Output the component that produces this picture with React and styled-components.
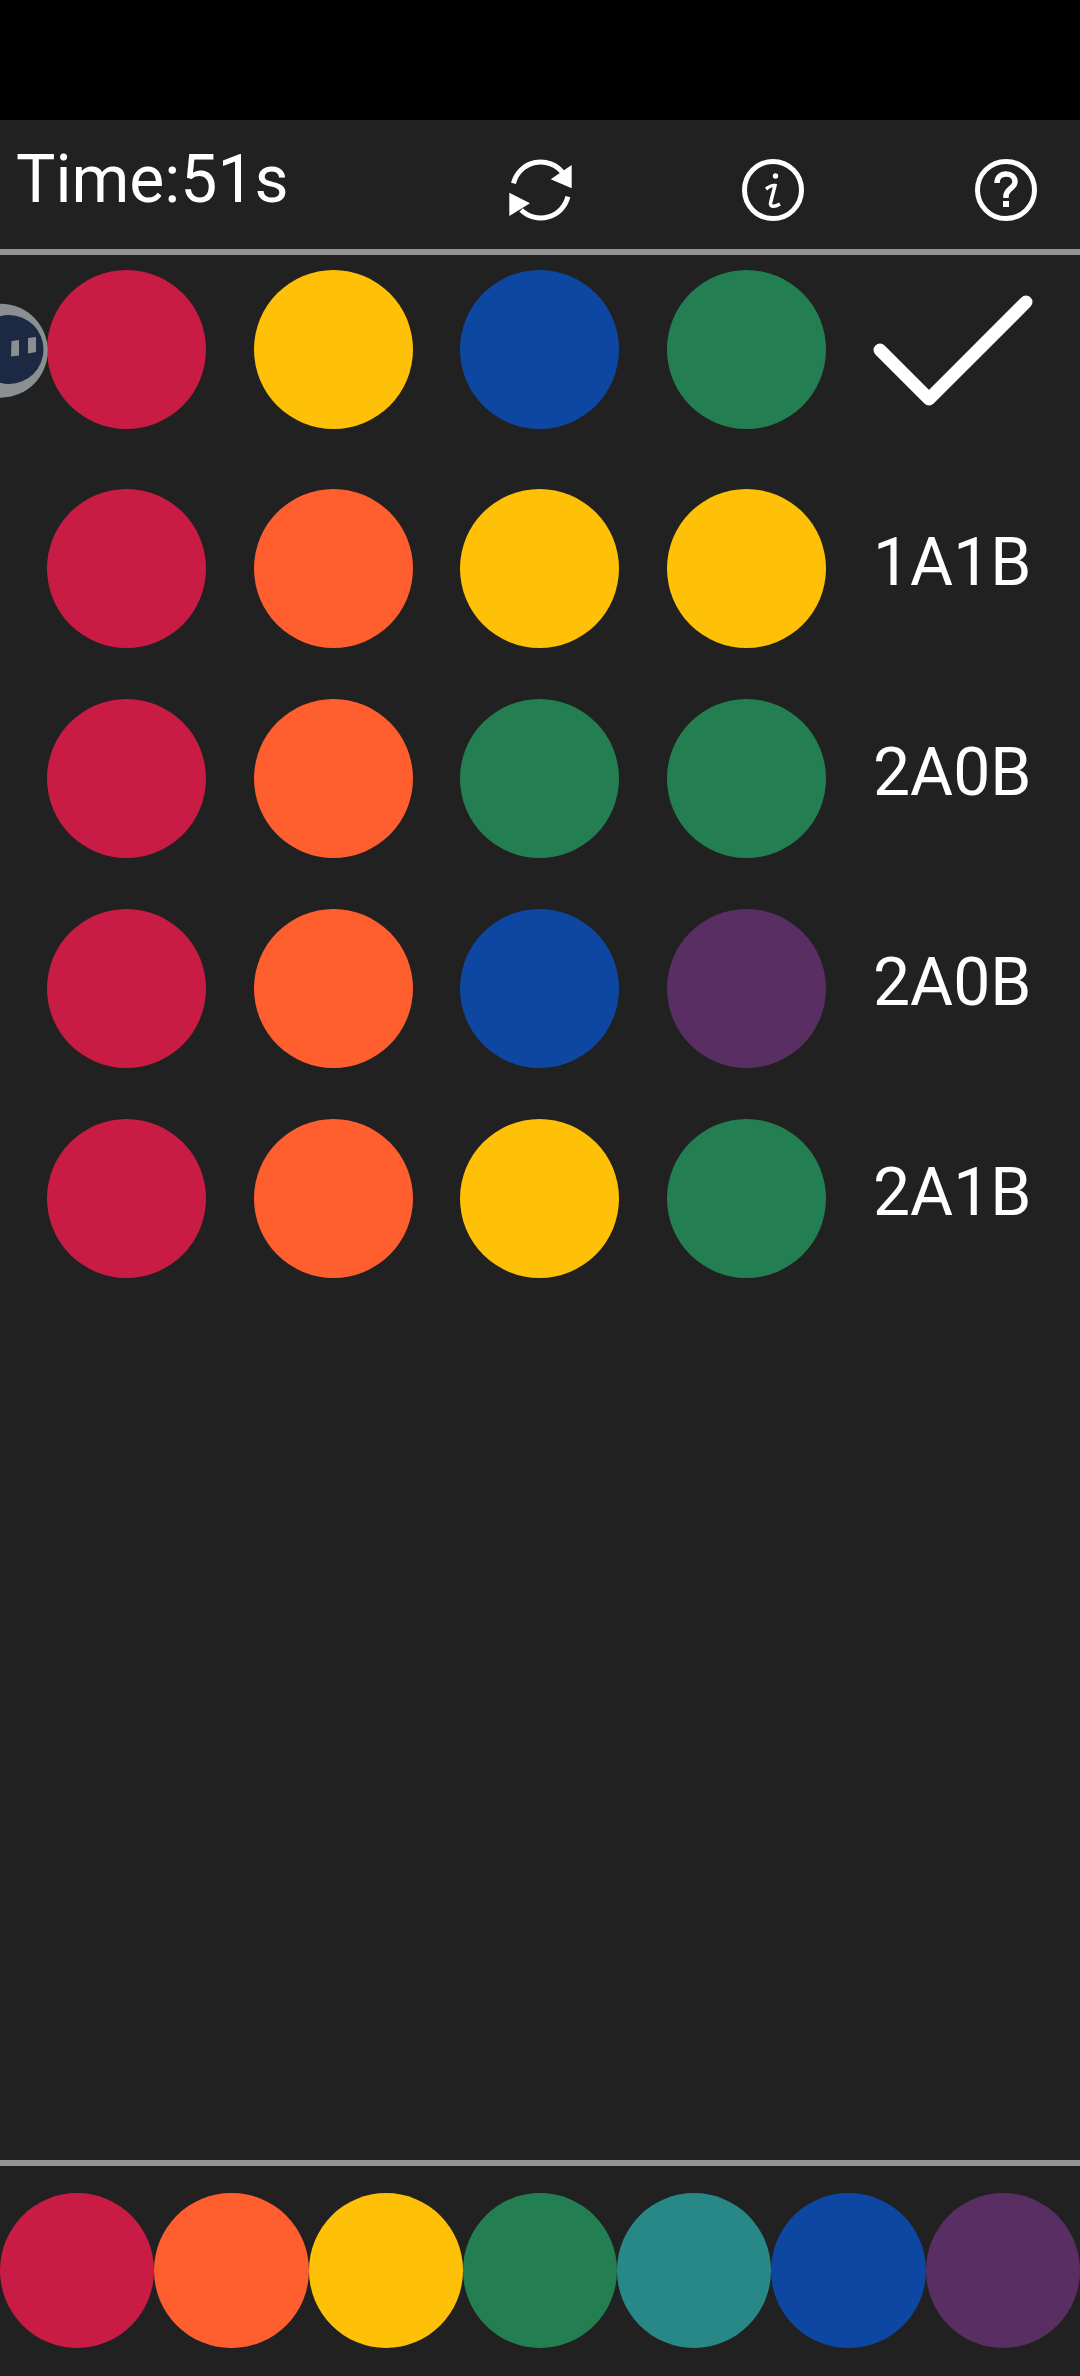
import React from "react";
import styled, { createGlobalStyle } from "styled-components";

const COLORS = {
  red: "#c91c44",
  orange: "#ff5f2e",
  yellow: "#ffc107",
  green: "#237f52",
  teal: "#288888",
  blue: "#0d47a1",
  purple: "#592e62",
};

const GUESSES = [
  { pegs: ["red", "orange", "yellow", "yellow"], result: "1A1B" },
  { pegs: ["red", "orange", "green", "green"], result: "2A0B" },
  { pegs: ["red", "orange", "blue", "purple"], result: "2A0B" },
  { pegs: ["red", "orange", "yellow", "green"], result: "2A1B" },
];

const GlobalStyle = createGlobalStyle`
  html, body {
    margin: 0;
    padding: 0;
    background: #212121;
  }
`;

const Page = styled.div`
  position: relative;
  width: 1080px;
  height: 2376px;
  display: flex;
  flex-direction: column;
  overflow: hidden;
  background: #212121;
  color: #fff;
  font-family: Roboto, "Liberation Sans", sans-serif;
`;

const StatusBar = styled.div`
  height: 120px;
  flex: none;
  background: #000;
`;

const Header = styled.header`
  height: 129px;
  flex: none;
  display: flex;
  justify-content: space-between;
  padding: 0 38px 0 16px;
`;

const Timer = styled.div`
  font-size: 66px;
  line-height: 76px;
  margin-top: 22px;
`;

const Tools = styled.div`
  display: flex;
  gap: 161px;
  padding-top: 34px;
`;

const ToolIcon = styled.svg`
  display: block;
  width: 72px;
  height: 72px;
  fill: none;
  stroke: #fff;
`;

const Divider = styled.div`
  height: 6px;
  flex: none;
  background: #939393;
`;

const Board = styled.main`
  flex: 1;
  display: flex;
  flex-direction: column;
  gap: 51px;
  padding: 15px 0 0 47px;
`;

const Row = styled.div`
  display: flex;
  align-items: center;
  margin-bottom: ${(p) => (p.$current ? "8.5px" : "0")};
`;

const Pegs = styled.div`
  display: grid;
  grid-template-columns: repeat(4, 159px);
  column-gap: 47.5px;
`;

const Peg = styled.div`
  width: 159px;
  height: 159px;
  border-radius: 50%;
  background: ${(p) => COLORS[p.$color]};
`;

const Result = styled.div`
  margin: 0 0 10px 47.5px;
  font-size: 66px;
  line-height: 76px;
`;

const CheckIcon = styled.svg`
  display: block;
  width: 170px;
  height: 122px;
  margin: 12px 0 0 47px;
  fill: none;
  stroke: #fff;
  stroke-width: 13;
  stroke-linecap: round;
  stroke-linejoin: round;
`;

const Palette = styled.footer`
  flex: none;
  height: 210px;
  display: grid;
  grid-template-columns: repeat(7, 1fr);
  padding-top: 27px;
  box-sizing: border-box;
`;

const Swatch = styled.div`
  height: 155px;
  border-radius: 50%;
  background: ${(p) => COLORS[p.$color]};
`;

const FloatingBall = styled.svg`
  position: absolute;
  left: 0;
  top: 300px;
  width: 50px;
  height: 100px;
`;

const RefreshGlyph = () => (
  <ToolIcon viewBox="0 0 72 72">
    <path d="M9.500 29.300A28 28 0 0 1 59.200 19.300" strokeWidth="5" />
    <path d="M63.900 42.700A28 28 0 0 1 17.100 56" strokeWidth="5" />
    <path d="M67.700 11V34.300L46.700 25.300Z" fill="#fff" stroke="none" />
    <path d="M5.300 38.700V62L26 49.300Z" fill="#fff" stroke="none" />
  </ToolIcon>
);

const InfoGlyph = () => (
  <ToolIcon viewBox="0 0 72 72">
    <circle cx="36" cy="36" r="28.500" strokeWidth="5" />
    <circle cx="38.500" cy="22" r="2.700" fill="#fff" stroke="none" />
    <path
      d="M29 35C33 32 36 31 38 31.500L33.500 49C33 53 37 53.500 43 50"
      strokeWidth="3.500"
    />
  </ToolIcon>
);

const HelpGlyph = () => (
  <ToolIcon viewBox="0 0 72 72">
    <circle cx="36" cy="36" r="28.500" strokeWidth="5" />
    <path
      d="M27 29C27 23 31 20 36 20C41 20 45 23 45 28C45 34 36 35 36 42V44"
      strokeWidth="5.500"
    />
    <rect x="33" y="47" width="6" height="6" fill="#fff" stroke="none" />
  </ToolIcon>
);

const App = () => {
  return (
    <Page>
      <GlobalStyle />
      <StatusBar />
      <Header>
        <Timer>Time:51s</Timer>
        <Tools>
          <RefreshGlyph />
          <InfoGlyph />
          <HelpGlyph />
        </Tools>
      </Header>
      <Divider />
      <Board>
        <Row $current>
          <Pegs>
            <Peg $color="red" />
            <Peg $color="yellow" />
            <Peg $color="blue" />
            <Peg $color="green" />
          </Pegs>
          <CheckIcon viewBox="0 0 170 122">
            <path d="M7 55L56 104L153 7" />
          </CheckIcon>
        </Row>
        {GUESSES.map((guess, i) => (
          <Row key={i}>
            <Pegs>
              {guess.pegs.map((color, j) => (
                <Peg key={j} $color={color} />
              ))}
            </Pegs>
            <Result>{guess.result}</Result>
          </Row>
        ))}
      </Board>
      <Divider />
      <Palette>
        {Object.keys(COLORS).map((color) => (
          <Swatch key={color} $color={color} />
        ))}
      </Palette>
      <FloatingBall viewBox="0 0 50 100">
        <circle cx="0.7" cy="50.700" r="47" fill="#8c8f92" />
        <circle cx="9" cy="49.500" r="34.500" fill="#1b2a42" />
        <path d="M11.500 41L19 40V55.500L11 56.500Z" fill="#8c8f92" />
        <path d="M28 38L36 37V52L28 53.500Z" fill="#8c8f92" />
      </FloatingBall>
    </Page>
  );
};

export default App;
